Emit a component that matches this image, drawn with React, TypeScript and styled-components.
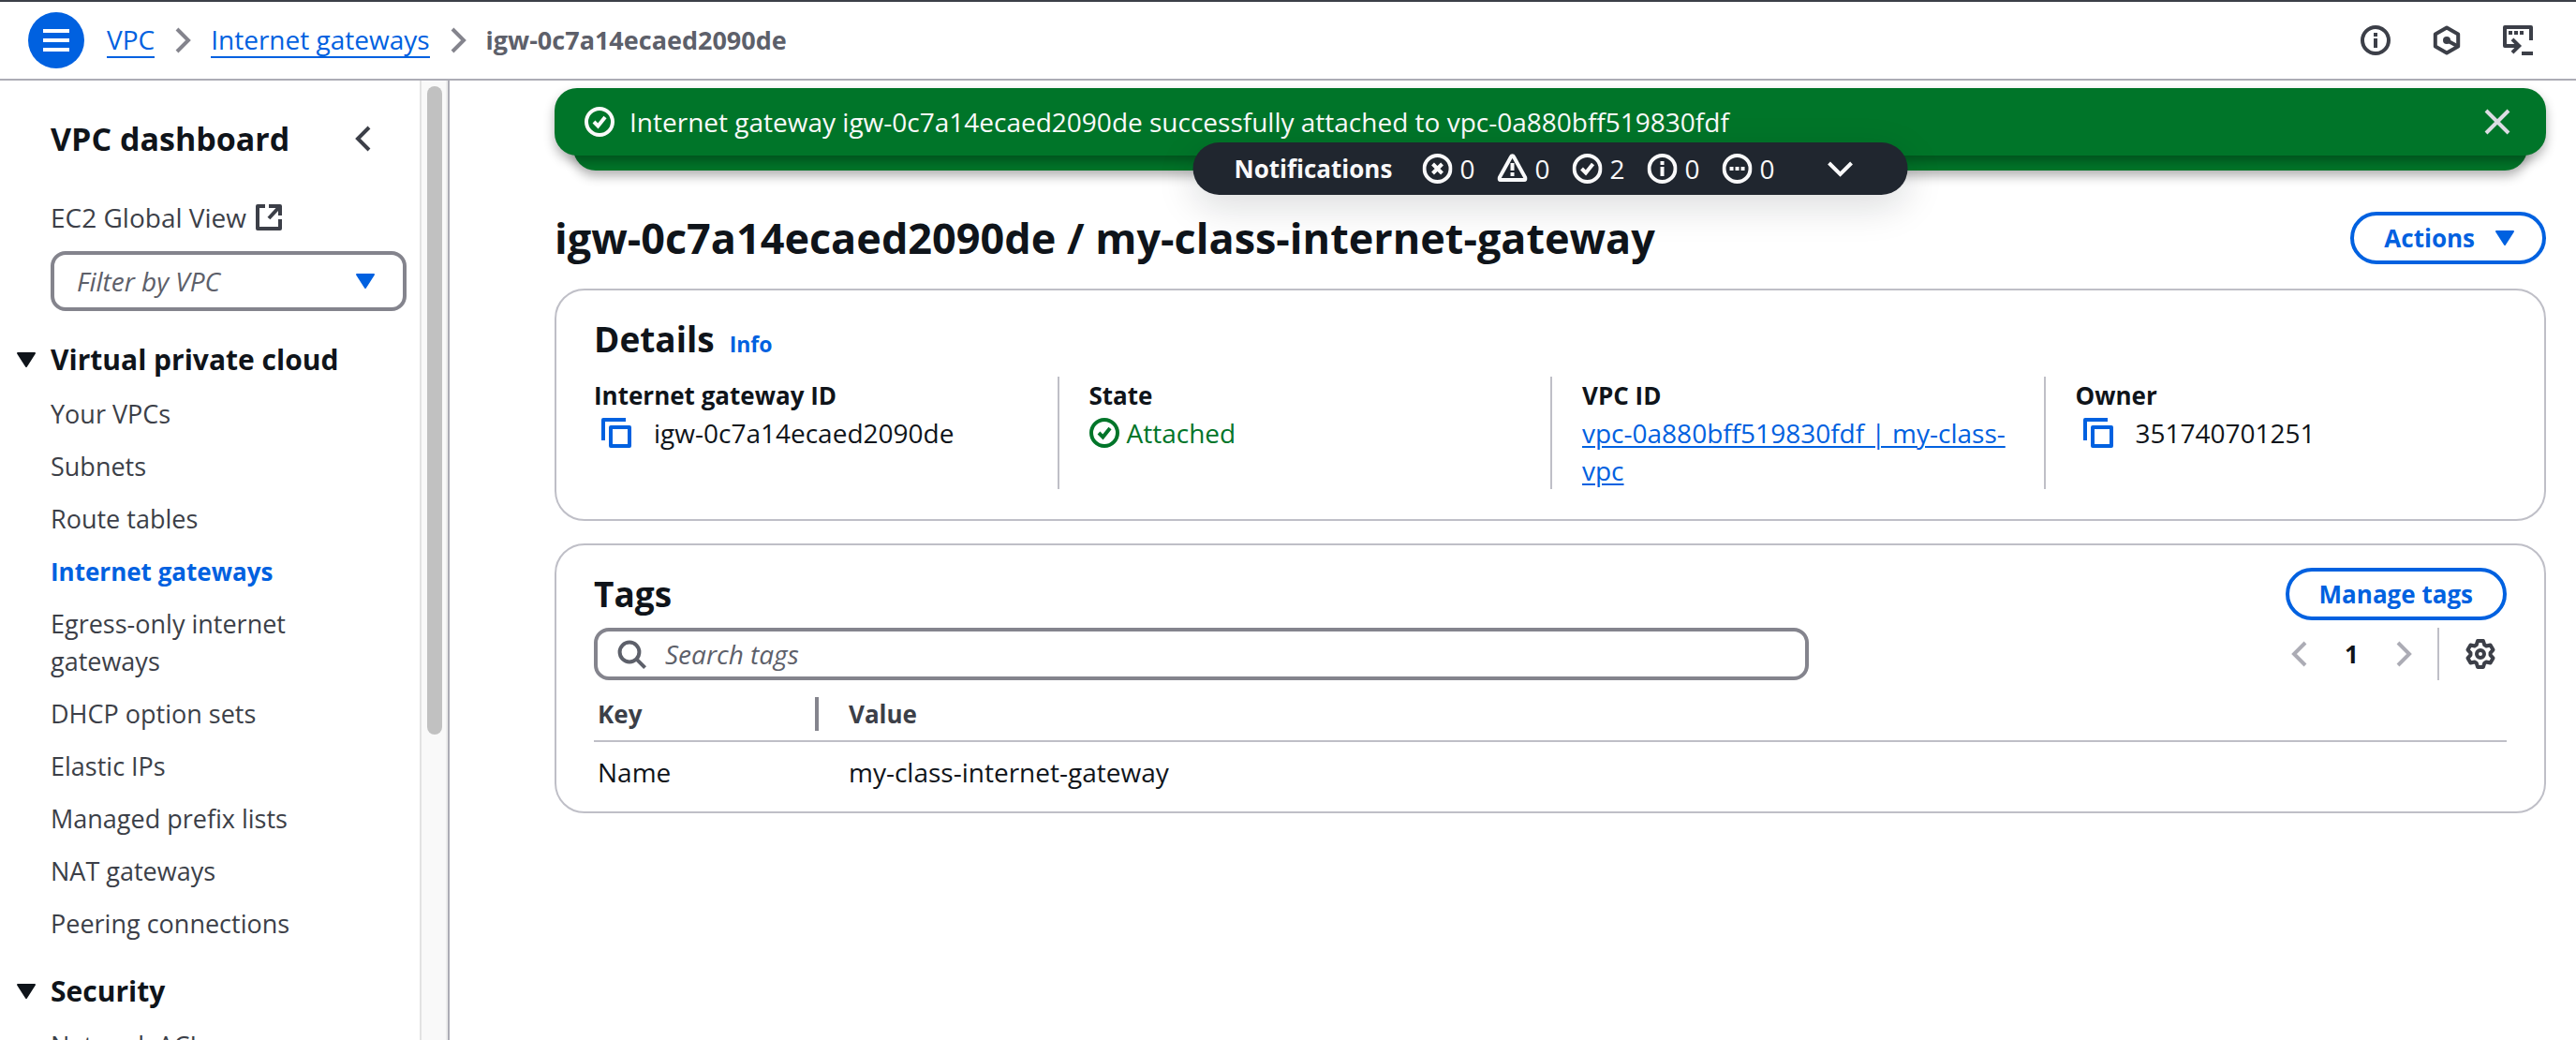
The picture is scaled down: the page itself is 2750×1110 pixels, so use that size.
import React from "react";
import styled, { createGlobalStyle } from "styled-components";

const color = {
  text: "#0f141a",
  body: "#3c3f48",
  muted: "#5d606a",
  blue: "#0061e0",
  green: "#007529",
  line: "#bfbfc7",
  control: "#84848d",
  disabled: "#acacb5",
  pill: "#20262f",
};

const Global = createGlobalStyle`
  *, *::before, *::after { box-sizing: border-box; }
  body { margin: 0; background: #fff; }
  body, button, input, select {
    font-family: "Open Sans", "Noto Sans", "Liberation Sans", sans-serif;
    font-size: 28px;
    line-height: 40px;
    color: ${color.text};
  }
  button { margin: 0; padding: 0; border: 0; background: none; cursor: pointer; }
  h1, h2, h3, ul, dl, dd { margin: 0; padding: 0; }
  ul { list-style: none; }
`;

const Page = styled.div`
  height: 100vh;
  display: flex;
  flex-direction: column;
  overflow: hidden;
`;

const TopBar = styled.header`
  display: flex;
  align-items: center;
  flex: none;
  height: 86px;
  padding: 0 46px 0 30px;
  border-top: 2px solid ${color.body};
  border-bottom: 2px solid ${color.disabled};
`;

const MenuButton = styled.button`
  display: flex;
  align-items: center;
  justify-content: center;
  width: 60px;
  height: 60px;
  margin-right: 24px;
  border-radius: 50%;
  background: ${color.blue};
  color: #fff;
`;

const Breadcrumbs = styled.nav`
  display: flex;
  align-items: center;
  gap: 14px;
  flex: 1;
  color: ${color.control};
`;

const Crumb = styled.a`
  color: ${color.blue};
  text-decoration: none;
  line-height: 36px;
  border-bottom: 2px solid ${color.blue};
`;

const CurrentCrumb = styled.span`
  color: ${color.muted};
  font-size: 27px;
  font-weight: 700;
`;

const Tools = styled.div`
  display: flex;
  gap: 44px;
`;

const IconButton = styled.button<{ $tone?: string }>`
  display: flex;
  color: ${(p) => p.$tone ?? color.body};
`;

const Body = styled.div`
  display: flex;
  flex: 1;
  min-height: 0;
`;

const Sidebar = styled.aside`
  display: flex;
  flex: none;
  width: 480px;
  border-right: 2px solid ${color.disabled};
`;

const SideContent = styled.div`
  flex: 1;
  overflow: hidden;
  padding: 40px 14px 0 54px;
`;

const Track = styled.div`
  width: 30px;
  padding: 6px 6px 0;
  border-left: 2px solid #e2e2e2;
  border-right: 2px solid #ededed;
  background: #f9f9f9;
`;

const Thumb = styled.div`
  width: 16px;
  height: 68%;
  border-radius: 8px;
  background: #c1c1c1;
`;

const SideHeader = styled.div`
  display: flex;
  align-items: center;
  justify-content: space-between;
  padding-right: 30px;
  margin-bottom: 42px;
`;

const SideTitle = styled.h2`
  font-size: 34px;
  line-height: 44px;
  font-weight: 700;
`;

const GlobalLink = styled.a`
  display: flex;
  align-items: center;
  gap: 8px;
  color: ${color.body};
  text-decoration: none;
`;

const SelectBox = styled.label`
  display: block;
  position: relative;
  margin-top: 16px;
  color: ${color.blue};

  svg {
    position: absolute;
    right: 28px;
    top: 16px;
    pointer-events: none;
  }
`;

const Select = styled.select`
  appearance: none;
  display: block;
  width: 100%;
  height: 64px;
  padding: 0 64px 0 24px;
  border: 4px solid ${color.control};
  border-radius: 16px;
  background: #fff;
  color: ${color.muted};
  font-style: italic;
`;

const Section = styled.section`
  margin-top: 32px;
`;

const SectionTitle = styled.h3`
  margin-left: -42px;
  font-size: 30px;
  line-height: 40px;
  font-weight: 700;
`;

const SectionToggle = styled.button`
  display: flex;
  align-items: center;
  gap: 10px;
  font: inherit;
`;

const NavList = styled.ul`
  display: flex;
  flex-direction: column;
  gap: 16px;
  padding-top: 18px;
  padding-right: 60px;
`;

const NavLink = styled.a<{ $active: boolean }>`
  display: block;
  color: ${(p) => (p.$active ? color.blue : color.body)};
  font-size: ${(p) => (p.$active ? 26 : 27)}px;
  font-weight: ${(p) => (p.$active ? 700 : 400)};
  text-decoration: none;
`;

const Main = styled.main`
  flex: 1;
  min-width: 0;
  padding: 8px 32px 0 112px;
`;

const FlashStack = styled.div`
  position: relative;
  isolation: isolate;
  margin-bottom: 44px;
`;

const Flash = styled.div`
  position: relative;
  z-index: 1;
  display: flex;
  align-items: center;
  gap: 16px;
  height: 72px;
  padding: 0 36px 0 32px;
  border-radius: 24px;
  background: ${color.green};
  box-shadow: 0 6px 12px rgba(0, 0, 0, 0.3);
  color: #fafafa;

  p { flex: 1; margin: 0; }
`;

const FlashBehind = styled.div`
  height: 56px;
  margin: -40px 20px 0;
  border-radius: 24px;
  background: ${color.green};
  box-shadow: 0 6px 12px rgba(0, 0, 0, 0.3);
`;

const NotificationBar = styled.button`
  position: absolute;
  z-index: 2;
  top: 58px;
  left: 50%;
  transform: translateX(-50%);
  display: flex;
  align-items: center;
  height: 56px;
  padding: 0 56px 0 44px;
  border-radius: 28px;
  background: ${color.pill};
  box-shadow: 0 12px 40px rgba(15, 20, 26, 0.15);
  color: #f9f9fa;
  white-space: nowrap;

  strong { font-size: 26px; font-weight: 700; }
`;

const Counters = styled.span`
  display: flex;
  gap: 24px;
  margin: 0 54px 0 32px;
`;

const Counter = styled.span`
  display: flex;
  align-items: center;
  gap: 8px;
`;

const TitleRow = styled.div`
  display: flex;
  align-items: center;
  justify-content: space-between;
  margin-bottom: 26px;
`;

const PageTitle = styled.h1`
  font-size: 45px;
  line-height: 56px;
  font-weight: 700;
`;

const OutlineButton = styled.button`
  display: flex;
  align-items: center;
  gap: 16px;
  height: 56px;
  padding: 0 24px 0 32px;
  border: 4px solid ${color.blue};
  border-radius: 28px;
  color: ${color.blue};
  font-size: 26px;
  font-weight: 700;
`;

const WideButton = styled(OutlineButton)`
  padding: 0 32px;
`;

const Card = styled.section`
  margin-bottom: 24px;
  border: 2px solid ${color.line};
  border-radius: 32px;
`;

const DetailsCard = styled(Card)`
  padding: 28px 40px 32px;
`;

const TagsCard = styled(Card)`
  padding: 24px 40px 12px;
`;

const CardTitle = styled.h2`
  font-size: 37px;
  line-height: 48px;
  font-weight: 700;
`;

const DetailsHeader = styled.div`
  display: flex;
  align-items: baseline;
  gap: 16px;
  margin-bottom: 16px;
`;

const InfoLink = styled.a`
  color: ${color.blue};
  font-size: 23px;
  line-height: 32px;
  font-weight: 700;
  text-decoration: none;
`;

const DetailGrid = styled.dl`
  display: grid;
  grid-template-columns: repeat(4, minmax(0, 1fr));
  margin: 0 -32px;
`;

const Detail = styled.div`
  padding: 0 32px;

  & + & { border-left: 2px solid ${color.line}; }
  dt { font-size: 26px; font-weight: 700; }
`;

const CopyValue = styled.dd`
  display: flex;
  align-items: center;
  gap: 24px;
  padding-left: 8px;
`;

const StatusValue = styled.dd`
  display: flex;
  align-items: center;
  gap: 8px;
  color: ${color.green};
`;

const TextLink = styled.a`
  color: ${color.blue};
  text-decoration-thickness: 2px;
  text-underline-offset: 3px;
`;

const TagsHeader = styled.div`
  display: flex;
  align-items: center;
  justify-content: space-between;
  margin-bottom: 8px;
`;

const TagsTools = styled.div`
  display: grid;
  grid-template-columns: 7fr 4fr;
  gap: 4px;
`;

const SearchBox = styled.label`
  display: flex;
  align-items: center;
  gap: 20px;
  height: 56px;
  padding: 0 20px;
  border: 4px solid ${color.control};
  border-radius: 16px;
  color: ${color.muted};
`;

const SearchInput = styled.input`
  flex: 1;
  min-width: 0;
  height: 40px;
  padding: 0;
  border: 0;
  outline: 0;
  background: none;

  &::placeholder {
    color: ${color.muted};
    font-style: italic;
    opacity: 1;
  }
`;

const Pager = styled.div`
  display: flex;
  align-items: center;
  justify-content: flex-end;
  padding-right: 12px;
`;

const PageNumber = styled.button`
  margin: 0 32px;
  font-size: 26px;
  font-weight: 700;
`;

const PagerDivider = styled.span`
  width: 2px;
  height: 56px;
  margin: 0 28px 0 20px;
  background: ${color.line};
`;

const Table = styled.table`
  width: 100%;
  border-collapse: separate;
  border-spacing: 0;
  table-layout: fixed;

  th {
    padding: 18px 0 10px;
    border-bottom: 2px solid ${color.line};
    color: ${color.body};
    font-size: 26px;
    font-weight: 700;
    text-align: left;
  }
  td { padding: 12px 4px 10px; }
  th:first-child { width: 240px; }
  th:last-child, td:last-child { padding-left: 32px; }
`;

const HeadCell = styled.div<{ $divided?: boolean }>`
  padding-left: ${(p) => (p.$divided ? 4 : 0)}px;
  border-right: ${(p) => (p.$divided ? `4px solid ${color.control}` : "0")};
  line-height: 36px;
`;

const Svg = styled.svg`
  display: block;
  flex: none;
  width: 32px;
  height: 32px;
`;

const gearPath = (() => {
  const points: string[] = [];
  for (let i = 0; i < 6; i++) {
    const corners: [number, number][] = [[-24, 5.3], [-12, 7.1], [12, 7.1], [24, 5.3]];
    for (const [offset, radius] of corners) {
      const a = ((i * 60 + offset - 90) * Math.PI) / 180;
      points.push(`${(8 + radius * Math.cos(a)).toFixed(2)} ${(8 + radius * Math.sin(a)).toFixed(2)}`);
    }
  }
  return `M${points.join("L")}Z`;
})();

const ring = <circle cx="8" cy="8" r="7" />;

const drawings = {
  menu: <path d="M1 3h14M1 8h14M1 13h14" />,
  right: <path d="m5 2 6 6-6 6" />,
  left: <path d="M11 2 5 8l6 6" />,
  down: <path d="m2 5 6 6 6-6" />,
  close: <path d="m2 2 12 12M14 2 2 14" />,
  caret: <path d="M3.5 4.5h9L8 11.5z" fill="currentColor" strokeWidth="1" strokeLinejoin="round" />,
  info: <>{ring}<path d="M8 4v2M8 7v5" /></>,
  success: <>{ring}<path d="m5 8 2.2 2.2L11 5.5" /></>,
  error: <>{ring}<path d="m5.5 5.5 5 5m0-5-5 5" /></>,
  pending: <>{ring}<path d="M4 8h2M7 8h2M10 8h2" /></>,
  warning: (
    <>
      <path d="M7.3 1.6c.3-.6 1.1-.6 1.4 0l6.2 11.2c.3.6 0 1.2-.6 1.2H1.7c-.6 0-.9-.6-.6-1.2z" />
      <path d="M8 5v4M8 10v2" />
    </>
  ),
  hexagon: (
    <>
      <path d="m8 1.3 6.1 3.4v6.6L8 14.7l-6.1-3.4V4.7z" strokeLinejoin="round" />
      <circle cx="8" cy="8" r="2" fill="currentColor" stroke="none" />
      <path d="m8 8 6 3.2" />
    </>
  ),
  shell: (
    <>
      <path d="M8.5 11H1V1h14v7" strokeLinejoin="round" />
      <path d="M3 4h2M6 4h2M9 4h2M5 7.4 8.6 11 5 14.6M10 15h6" />
    </>
  ),
  external: <path d="M6 2H2v12h12V9M8 2h6v5M14 2 8 8.5" strokeLinejoin="round" />,
  copy: <path d="M1 12V1h12M5 5h10v10H5z" strokeLinejoin="round" />,
  search: <><circle cx="7" cy="7" r="5.2" /><path d="m10.8 10.8 4.5 4.5" /></>,
  gear: <><path d={gearPath} strokeLinejoin="round" /><circle cx="8" cy="8" r="2" /></>,
};

type IconName = keyof typeof drawings;

const Icon = ({ name }: { name: IconName }) => (
  <Svg viewBox="0 0 16 16" fill="none" stroke="currentColor" strokeWidth="2" aria-hidden="true">
    {drawings[name]}
  </Svg>
);

const sections = [
  {
    title: "Virtual private cloud",
    items: [
      "Your VPCs",
      "Subnets",
      "Route tables",
      "Internet gateways",
      "Egress-only internet gateways",
      "DHCP option sets",
      "Elastic IPs",
      "Managed prefix lists",
      "NAT gateways",
      "Peering connections",
    ],
  },
  { title: "Security", items: ["Network ACLs"] },
];

const counters: { icon: IconName; count: number }[] = [
  { icon: "error", count: 0 },
  { icon: "warning", count: 0 },
  { icon: "success", count: 2 },
  { icon: "info", count: 0 },
  { icon: "pending", count: 0 },
];

export default function App() {
  return (
    <Page>
      <Global />
      <TopBar>
        <MenuButton aria-label="Toggle navigation"><Icon name="menu" /></MenuButton>
        <Breadcrumbs aria-label="Breadcrumbs">
          <Crumb href="#vpc">VPC</Crumb>
          <Icon name="right" />
          <Crumb href="#igws">Internet gateways</Crumb>
          <Icon name="right" />
          <CurrentCrumb>igw-0c7a14ecaed2090de</CurrentCrumb>
        </Breadcrumbs>
        <Tools>
          <IconButton aria-label="Info"><Icon name="info" /></IconButton>
          <IconButton aria-label="Diagnostics"><Icon name="hexagon" /></IconButton>
          <IconButton aria-label="CloudShell"><Icon name="shell" /></IconButton>
        </Tools>
      </TopBar>
      <Body>
        <Sidebar>
          <SideContent>
            <SideHeader>
              <SideTitle>VPC dashboard</SideTitle>
              <IconButton aria-label="Close navigation"><Icon name="left" /></IconButton>
            </SideHeader>
            <GlobalLink href="#global">EC2 Global View <Icon name="external" /></GlobalLink>
            <SelectBox>
              <Select aria-label="Filter by VPC" defaultValue="">
                <option value="">Filter by VPC</option>
              </Select>
              <Icon name="caret" />
            </SelectBox>
            {sections.map((section) => (
              <Section key={section.title}>
                <SectionTitle>
                  <SectionToggle aria-expanded="true"><Icon name="caret" />{section.title}</SectionToggle>
                </SectionTitle>
                <NavList>
                  {section.items.map((item) => (
                    <li key={item}>
                      <NavLink href="#nav" $active={item === "Internet gateways"}>{item}</NavLink>
                    </li>
                  ))}
                </NavList>
              </Section>
            ))}
          </SideContent>
          <Track><Thumb /></Track>
        </Sidebar>
        <Main>
          <FlashStack>
            <Flash role="status">
              <Icon name="success" />
              <p>Internet gateway igw-0c7a14ecaed2090de successfully attached to vpc-0a880bff519830fdf</p>
              <IconButton aria-label="Dismiss" $tone="#dcdce4"><Icon name="close" /></IconButton>
            </Flash>
            <FlashBehind />
            <NotificationBar>
              <strong>Notifications</strong>
              <Counters>
                {counters.map((c) => (
                  <Counter key={c.icon}><Icon name={c.icon} />{c.count}</Counter>
                ))}
              </Counters>
              <Icon name="down" />
            </NotificationBar>
          </FlashStack>
          <TitleRow>
            <PageTitle>igw-0c7a14ecaed2090de / my-class-internet-gateway</PageTitle>
            <OutlineButton>Actions <Icon name="caret" /></OutlineButton>
          </TitleRow>
          <DetailsCard>
            <DetailsHeader>
              <CardTitle>Details</CardTitle>
              <InfoLink href="#info">Info</InfoLink>
            </DetailsHeader>
            <DetailGrid>
              <Detail>
                <dt>Internet gateway ID</dt>
                <CopyValue>
                  <IconButton aria-label="Copy gateway ID" $tone={color.blue}><Icon name="copy" /></IconButton>
                  igw-0c7a14ecaed2090de
                </CopyValue>
              </Detail>
              <Detail>
                <dt>State</dt>
                <StatusValue><Icon name="success" />Attached</StatusValue>
              </Detail>
              <Detail>
                <dt>VPC ID</dt>
                <dd><TextLink href="#vpc">vpc-0a880bff519830fdf | my-class-vpc</TextLink></dd>
              </Detail>
              <Detail>
                <dt>Owner</dt>
                <CopyValue>
                  <IconButton aria-label="Copy owner" $tone={color.blue}><Icon name="copy" /></IconButton>
                  351740701251
                </CopyValue>
              </Detail>
            </DetailGrid>
          </DetailsCard>
          <TagsCard>
            <TagsHeader>
              <CardTitle>Tags</CardTitle>
              <WideButton>Manage tags</WideButton>
            </TagsHeader>
            <TagsTools>
              <SearchBox>
                <Icon name="search" />
                <SearchInput type="text" placeholder="Search tags" aria-label="Search tags" />
              </SearchBox>
              <Pager>
                <IconButton aria-label="Previous page" $tone={color.disabled}><Icon name="left" /></IconButton>
                <PageNumber>1</PageNumber>
                <IconButton aria-label="Next page" $tone={color.disabled}><Icon name="right" /></IconButton>
                <PagerDivider />
                <IconButton aria-label="Preferences"><Icon name="gear" /></IconButton>
              </Pager>
            </TagsTools>
            <Table>
              <thead>
                <tr>
                  <th scope="col"><HeadCell $divided>Key</HeadCell></th>
                  <th scope="col"><HeadCell>Value</HeadCell></th>
                </tr>
              </thead>
              <tbody>
                <tr>
                  <td>Name</td>
                  <td>my-class-internet-gateway</td>
                </tr>
              </tbody>
            </Table>
          </TagsCard>
        </Main>
      </Body>
    </Page>
  );
}
